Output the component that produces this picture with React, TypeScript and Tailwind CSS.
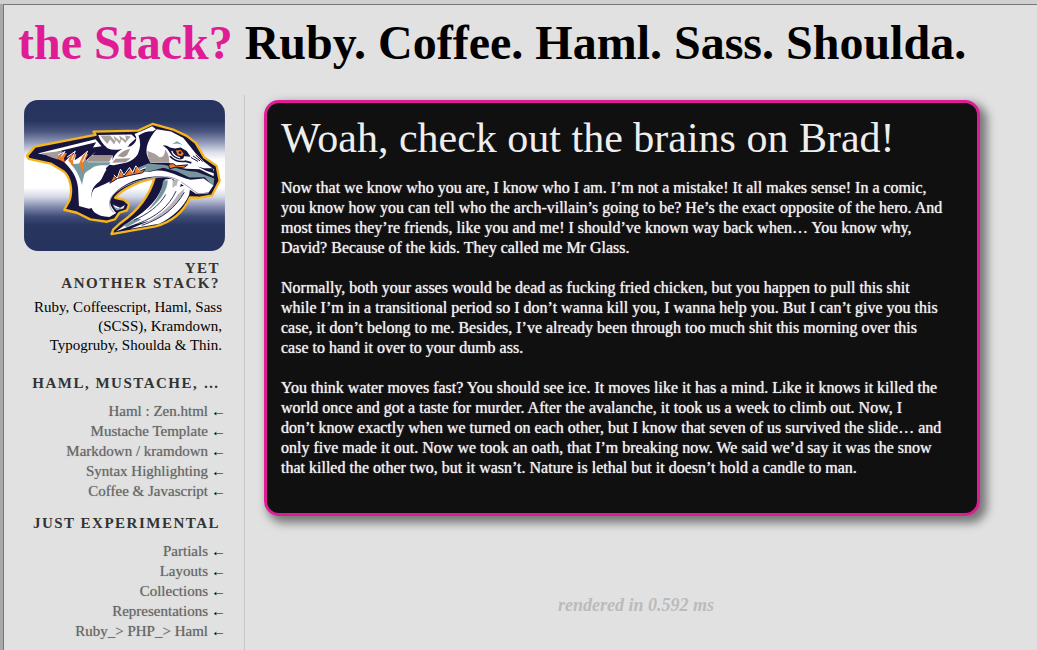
import React from "react";

const templateLinks = [
  "Haml : Zen.html",
  "Mustache Template",
  "Markdown / kramdown",
  "Syntax Highlighting",
  "Coffee & Javascript",
];

const experimentLinks = [
  "Partials",
  "Layouts",
  "Collections",
  "Representations",
  "Ruby_> PHP_> Haml",
];

const paragraphs = [
  [
    "Now that we know who you are, I know who I am. I’m not a mistake! It all makes sense! In a comic,",
    "you know how you can tell who the arch-villain’s going to be? He’s the exact opposite of the hero. And",
    "most times they’re friends, like you and me! I should’ve known way back when… You know why,",
    "David? Because of the kids. They called me Mr Glass.",
  ],
  [
    "Normally, both your asses would be dead as fucking fried chicken, but you happen to pull this shit",
    "while I’m in a transitional period so I don’t wanna kill you, I wanna help you. But I can’t give you this",
    "case, it don’t belong to me. Besides, I’ve already been through too much shit this morning over this",
    "case to hand it over to your dumb ass.",
  ],
  [
    "You think water moves fast? You should see ice. It moves like it has a mind. Like it knows it killed the",
    "world once and got a taste for murder. After the avalanche, it took us a week to climb out. Now, I",
    "don’t know exactly when we turned on each other, but I know that seven of us survived the slide… and",
    "only five made it out. Now we took an oath, that I’m breaking now. We said we’d say it was the snow",
    "that killed the other two, but it wasn’t. Nature is lethal but it doesn’t hold a candle to man.",
  ],
];

function Lines({ lines }: { lines: string[] }) {
  return (
    <>
      {lines.map((line, i) => (
        <React.Fragment key={line}>
          {line}
          {i < lines.length - 1 && <br />}
        </React.Fragment>
      ))}
    </>
  );
}

function Logo() {
  return (
    <svg
      viewBox="31 31 604 454"
      className="block h-[151px] w-[201px] rounded-[14px]"
      role="img"
      aria-label="Sabre-toothed cat logo"
    >
      <defs>
        <linearGradient id="sky" x1="0" y1="0" x2="0" y2="1">
          <stop offset="0" stopColor="#26335e" />
          <stop offset="0.14" stopColor="#27355f" />
          <stop offset="0.21" stopColor="#4b5680" />
          <stop offset="0.28" stopColor="#8f98b7" />
          <stop offset="0.35" stopColor="#dfe2ec" />
          <stop offset="0.4" stopColor="#fff" />
          <stop offset="0.58" stopColor="#fff" />
          <stop offset="0.64" stopColor="#d5d9e6" />
          <stop offset="0.71" stopColor="#8089ad" />
          <stop offset="0.77" stopColor="#414d79" />
          <stop offset="0.83" stopColor="#27355f" />
          <stop offset="1" stopColor="#26335e" />
        </linearGradient>
      </defs>
      <rect x="31" y="31" width="604" height="454" fill="url(#sky)" />
      {/* silhouette with the gold rim */}
      <path
        d="M40 199L64 171L246 136L240 126L374 123L417 103L482 121L520 139L547 160L572 203L610 229L619 274L596 318L556 325L530 324C512 364 477 397 426 411L294 434L299 421L322 400C365 370 405 330 423 266C372 277 325 299 305 325L332 331L347 345L340 363L318 370L304 390L280 397L230 390L190 370L152 361L168 332C178 299 170 262 149 245L111 222L45 208Z"
        fill="#17153f"
        stroke="#f5b51b"
        strokeWidth="7"
        strokeLinejoin="round"
      />
      {/* neck */}
      <path d="M72 192L246 149L264 170L238 174L248 158L150 181L100 196Z" fill="#fff" />
      <path d="M82 191L146 184L132 210L112 203Z" fill="#a69b98" />
      <path d="M152 218L168 201L188 194L183 212L218 191L210 220L249 184L236 198L298 198L296 218L279 234C262 259 271 270 251 281C229 300 230 325 240 354L226 358L196 350L194 310C195 275 181 245 152 218Z" fill="#fff" />
      <path d="M210 198L223 218L292 218L284 227L261 227C236 228 216 245 207 290C199 264 187 237 171 224L203 221Z" fill="#7799a0" />
      <path d="M232 199L297 199L287 217L218 217Z" fill="#9e918e" />
      <path d="M212 255C225 234 259 230 279 240C268 256 268 270 251 279C232 293 226 315 230 347L205 340C201 313 204 284 212 255Z" fill="#fff" />
      {/* ear */}
      <path d="M254 136L354 135L367 147L348 164Q342 178 322 179Q298 184 282 176Q262 160 254 136Z" fill="#fff" />
      <path d="M260 138L290 138L306 156L299 138L321 154L317 138L338 152L335 138L352 141L335 160L325 149L318 163L308 151L302 165L290 150L281 163Z" fill="#aba29f" />
      {/* cheek behind the dark stripe */}
      <path d="M304 197Q325 172 352 170Q371 158 368 142L363 133Q392 122 416 110L428 119L418 125Q395 124 375 138Q386 166 373 194Q362 211 340 219L300 227L288 226Z" fill="#fff" />
      <path d="M312 200Q328 180 350 178L340 198L330 203ZM306 208L352 206L336 218L296 220Z" fill="#a19694" />
      {/* face */}
      <path d="M430 119L473 126L510 145L546 190L572 217L602 240L601 260L559 239L520 238L489 233L467 220L411 220L403 203C391 176 408 143 430 119Z" fill="#fff" />
      <path d="M402 184Q425 190 438 203Q454 206 455 180Q467 192 468 219L411 219Q402 204 402 184Z" fill="#aa9e9c" />
      <path d="M404 222L438 225C475 226 500 244 549 247L603 267L600 291L574 263L528 264L491 246L450 235L394 249L352 244Z" fill="#77959d" />
      <path d="M243 297C276 285 286 277 314 265L375 249L410 247C453 232 488 260 532 271L571 267L600 288L586 309L548 313L507 286L474 266C420 252 332 269 293 324C283 339 295 356 308 371L288 383C247 380 231 365 232 339C233 320 233 309 243 297Z" fill="#fff" />
      <path d="M300 369C279 346 289 322 308 307C337 285 385 264 462 262C499 265 529 299 556 313L585 311" fill="none" stroke="#9c9caf" strokeWidth="3" />
      {/* orange fur */}
      <path d="M130 208L146 190L160 190L151 206L154 219ZM164 213L172 194L188 196L178 213L181 233ZM197 221L210 193L224 194L209 220L209 253Z" fill="#ef7d25" />
      <path d="M289 281L302 256L309 268L323 241L331 261L352 234L361 251L367 231L381 243L395 239L387 250L347 258L312 267Z" fill="#ef7d25" stroke="#17153f" strokeWidth="3" />
      <path d="M134 196L154 186L143 201M160 203L185 185L174 211M187 214L222 185L207 218M301 256L311 266L321 239L331 257L348 234L358 249L367 229L378 242L397 234" fill="none" stroke="#fff" strokeWidth="3" />
      {/* brow, eye and muzzle */}
      <path d="M448 167Q460 166 470 174Q484 179 502 174L520 184L532 202L512 200Q512 210 498 210Q478 204 470 190Q462 176 448 167Z" fill="#17153f" />
      <path d="M475 184Q480 200 500 205" fill="none" stroke="#fff" strokeWidth="4" />
      <path d="M487 183L502 181L511 192L506 199L493 197Z" fill="#ef7d25" />
      <circle cx="500" cy="189" r="4" fill="#17153f" />
      <path d="M470 200Q488 220 516 215L534 220" fill="none" stroke="#17153f" strokeWidth="5" />
      <path d="M477 163L491 155L508 166L492 162Z" fill="#77959d" />
      <path d="M533 204L554 216M539 199L560 214M547 196L568 216" stroke="#17153f" strokeWidth="3" fill="none" />
      <path d="M553 231L572 236L598 236L604 252L578 244Z" fill="#17153f" />
      <path d="M465 225L478 222L489 229L523 226L510 235L486 233L469 238Z" fill="#ef7d25" stroke="#17153f" strokeWidth="3" />
      {/* fangs */}
      <path d="M454 270L475 267L481 277C484 322 444 375 382 398L307 426L353 393C402 362 440 328 454 270Z" fill="#fff" />
      <path d="M485 273L505 272L500 293C490 330 462 369 411 393L370 404L415 378C453 350 478 315 485 273Z" fill="#fff" />
      <path d="M514 287L530 299L527 317C511 353 478 385 437 403L351 418L402 397C454 374 484 332 495 294Z" fill="#fff" />
      <path d="M449 274L463 272C463 304 437 338 400 366C435 327 445 305 449 274ZM328 408L371 385L383 390L341 413Z" fill="#77959d" />
      <path d="M478 273L495 270L490 287L477 294ZM494 314L514 297L507 318C479 362 440 392 397 400C448 370 473 348 494 314Z" fill="#b9b5bd" />
      <path d="M457 315C438 349 403 374 361 393M488 305C466 352 430 381 373 403M513 308C487 353 450 386 385 408" stroke="#37345d" strokeWidth="3" fill="none" />
      {/* lower jaw tooth */}
      <path d="M296 344L320 354L336 345L330 358L308 363Z" fill="#fff" stroke="#17153f" strokeWidth="2" />
      <path d="M299 351L313 357L328 354L309 362Z" fill="#77959d" />
    </svg>
  );
}

function SideHeading({ children }: { children: React.ReactNode }) {
  return (
    <h3 className="whitespace-nowrap pr-1.5 text-[15px] leading-[15px] font-bold tracking-widest text-[#333] uppercase">
      {children}
    </h3>
  );
}

function LinkList({ links }: { links: string[] }) {
  return (
    <ul className="text-[15px] leading-5">
      {links.map((link) => (
        <li key={link} className="flex justify-end gap-[3px] whitespace-nowrap">
          <a href="#" className="text-[#666] [text-shadow:0_0_1px_#999]">
            {link}
          </a>
          <span className="text-black">←</span>
        </li>
      ))}
    </ul>
  );
}

export default function App() {
  return (
    <div className="flex min-h-screen flex-col bg-[#d0d0d0] font-['Liberation_Serif',serif]">
      <div className="h-1" />
      <div className="flex grow bg-[#a8a8a8] pl-[3px]">
        <div className="flex grow flex-col border-t border-l border-[#777] bg-[#e1e1e1]">
          <h1 className="pt-3 pl-[14px] text-5xl leading-[52px] font-bold whitespace-nowrap text-black">
            <span className="text-[#e01b96]">the Stack?</span> Ruby. Coffee. Haml. Sass. Shoulda.
          </h1>
          <div className="flex grow pt-[26px]">
            <aside className="w-[241px] shrink-0 border-r border-[#c8c8c8] pt-[5px] pr-[18px] pl-5 text-right">
              <Logo />
              <div className="mt-[10px]">
                <SideHeading>
                  Yet
                  <br />
                  another stack?
                </SideHeading>
              </div>
              <p className="mt-[7px] pr-1 text-[15px] leading-[19px] whitespace-nowrap text-black">
                Ruby, Coffeescript, Haml, Sass
                <br />
                (SCSS), Kramdown,
                <br />
                Typogruby, Shoulda &amp; Thin.
              </p>
              <nav className="mt-[21px]">
                <SideHeading>Haml, Mustache, …</SideHeading>
                <div className="mt-[10px]">
                  <LinkList links={templateLinks} />
                </div>
              </nav>
              <nav className="mt-[15px]">
                <SideHeading>Just Experimental</SideHeading>
                <div className="mt-[10px]">
                  <LinkList links={experimentLinks} />
                </div>
              </nav>
            </aside>
            <div className="min-w-0 grow">
              <main className="mt-[5px] mr-[57px] ml-[19px] rounded-[15px] border-[3px] border-[#e01b96] bg-[#101010] px-[14px] pt-[9px] pb-[35px] whitespace-nowrap text-[#eee] shadow-[5px_5px_10px_2px_#777]">
                <h2 className="text-[42px] leading-[52px]">Woah, check out the brains on Brad!</h2>
                <div className="mt-[14px] flex flex-col gap-5 text-base leading-5 [text-shadow:0_0_1px_#eee]">
                  {paragraphs.map((lines) => (
                    <p key={lines[0]}>
                      <Lines lines={lines} />
                    </p>
                  ))}
                </div>
              </main>
              <footer className="mt-[79px] pr-[10px] text-center text-lg leading-5 font-bold text-[#bbb] italic">
                rendered in 0.592 ms
              </footer>
            </div>
          </div>
        </div>
      </div>
    </div>
  );
}
